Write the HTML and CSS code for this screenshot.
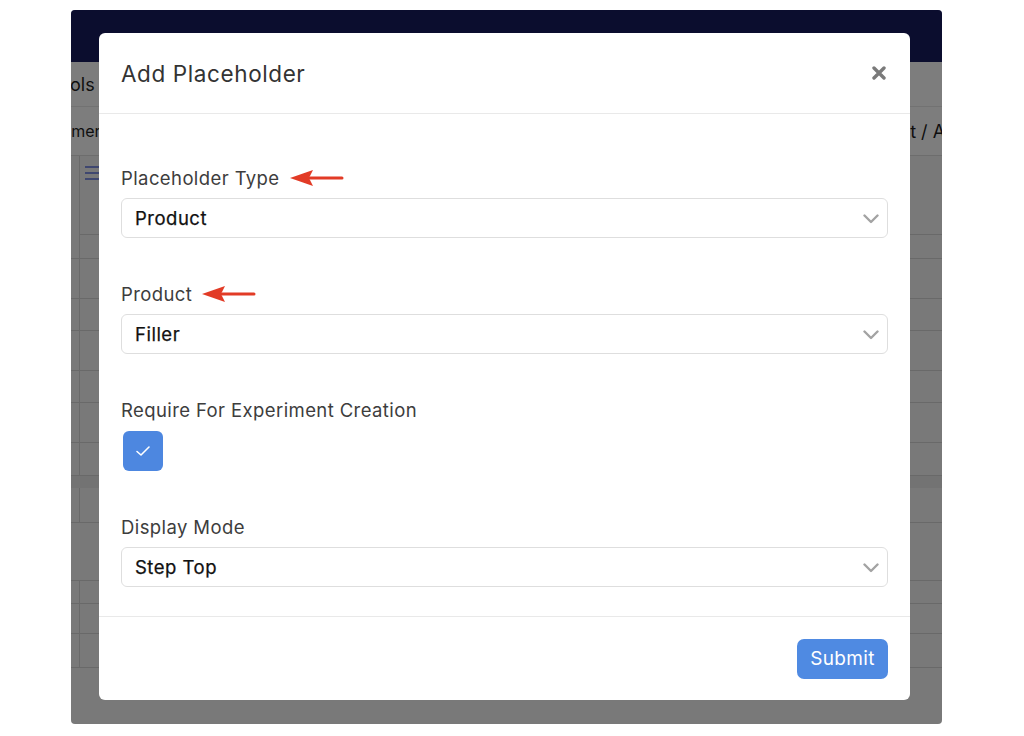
FILE: index.html
```html
<!DOCTYPE html>
<html lang="en">
<head>
    <meta charset="UTF-8">
    <meta name="viewport" content="width=device-width, initial-scale=1.0">
    <title>Add Placeholder</title>
    <link rel="stylesheet" href="styles.css">
</head>
<body>
    <div class="frame">
        <div class="app">
            <div class="topbar"></div>
            <div class="tabs"><span class="tab">Tools</span></div>
            <div class="crumbs">
                <span class="crumb-left">Customers</span>
                <span class="crumb-right">Experiment / Add Placeholder</span>
            </div>
            <div class="grid">
                <div class="row row-head">
                    <div class="cell-side"></div>
                    <div class="cell-main">
                        <div class="menu-icon"><span></span><span></span><span></span></div>
                    </div>
                </div>
                <div class="row" style="height: 40px"><div class="cell-side"></div></div>
                <div class="row" style="height: 32px"><div class="cell-side"></div></div>
                <div class="row" style="height: 40px"><div class="cell-side"></div></div>
                <div class="row" style="height: 32px"><div class="cell-side"></div></div>
                <div class="row" style="height: 40px"><div class="cell-side"></div></div>
                <div class="row" style="height: 33px"><div class="cell-side"></div></div>
                <div class="row band" style="height: 12px"></div>
                <div class="row" style="height: 35px"><div class="cell-side"></div></div>
                <div class="row" style="height: 58px"></div>
                <div class="row" style="height: 23px"><div class="cell-side"></div></div>
                <div class="row" style="height: 30px"><div class="cell-side"></div></div>
                <div class="row" style="height: 34px"><div class="cell-side"></div></div>
            </div>
        </div>

        <div class="backdrop"></div>

        <div class="modal">
            <div class="modal-header">
                <h1 class="modal-title">Add Placeholder</h1>
                <button class="close-btn" aria-label="Close">
                    <svg width="14" height="14" viewBox="0 0 14 14">
                        <path d="M2 2 L12 12 M12 2 L2 12" stroke="#7a7a7a" stroke-width="3.4" stroke-linecap="round"/>
                    </svg>
                </button>
            </div>

            <div class="modal-body">
                <div class="field">
                    <label class="field-label">Placeholder Type
                        <svg class="arrow" width="54" height="18" viewBox="0 0 54 18">
                            <path d="M20 9 H52" stroke="#e23b26" stroke-width="3" stroke-linecap="round"/>
                            <path d="M0 9 L23 1 L19 9 L23 17 Z" fill="#e23b26"/>
                        </svg>
                    </label>
                    <div class="select">
                        <span>Product</span>
                        <svg class="chevron" width="16" height="10" viewBox="0 0 16 10">
                            <path d="M1.5 1.5 L8 8 L14.5 1.5" fill="none" stroke="#a3a3a3" stroke-width="2.4" stroke-linecap="round" stroke-linejoin="round"/>
                        </svg>
                    </div>
                </div>

                <div class="field">
                    <label class="field-label">Product
                        <svg class="arrow" width="54" height="18" viewBox="0 0 54 18">
                            <path d="M20 9 H52" stroke="#e23b26" stroke-width="3" stroke-linecap="round"/>
                            <path d="M0 9 L23 1 L19 9 L23 17 Z" fill="#e23b26"/>
                        </svg>
                    </label>
                    <div class="select">
                        <span>Filler</span>
                        <svg class="chevron" width="16" height="10" viewBox="0 0 16 10">
                            <path d="M1.5 1.5 L8 8 L14.5 1.5" fill="none" stroke="#a3a3a3" stroke-width="2.4" stroke-linecap="round" stroke-linejoin="round"/>
                        </svg>
                    </div>
                </div>

                <div class="field">
                    <label class="field-label">Require For Experiment Creation</label>
                    <div class="checkbox">
                        <svg width="16" height="12" viewBox="0 0 16 12">
                            <path d="M2 6.5 L6 10 L14 2" fill="none" stroke="#fff" stroke-width="1.6" stroke-linecap="round" stroke-linejoin="round"/>
                        </svg>
                    </div>
                </div>

                <div class="field">
                    <label class="field-label">Display Mode</label>
                    <div class="select">
                        <span>Step Top</span>
                        <svg class="chevron" width="16" height="10" viewBox="0 0 16 10">
                            <path d="M1.5 1.5 L8 8 L14.5 1.5" fill="none" stroke="#a3a3a3" stroke-width="2.4" stroke-linecap="round" stroke-linejoin="round"/>
                        </svg>
                    </div>
                </div>
            </div>

            <div class="modal-footer">
                <button class="submit-btn">Submit</button>
            </div>
        </div>
    </div>
</body>
</html>
```

FILE: styles.css
```css
body {
    margin: 0;
    background-color: #ffffff;
    font-family: 'Inter', 'Liberation Sans', sans-serif;
}
.frame {
    position: relative;
    width: 871px;
    height: 714px;
    margin: 10px 0 0 71px;
    border-radius: 4px;
    overflow: hidden;
}
.app {
    height: 100%;
    display: flex;
    flex-direction: column;
    background-color: #ffffff;
    color: #1e1e1e;
    font-size: 18px;
}
.topbar {
    height: 52px;
    background-color: #161a5c;
}
.tabs {
    height: 44px;
    display: flex;
    align-items: center;
    border-bottom: 1px solid #e4e4e4;
    background-color: #fbfbfb;
}
.tab {
    margin-left: -22px;
}
.crumbs {
    height: 48px;
    display: flex;
    align-items: center;
    justify-content: space-between;
    background-color: #fbfbfb;
}
.crumb-left {
    margin-left: -44px;
    font-size: 16px;
}
.crumb-right {
    margin-right: -131px;
    white-space: nowrap;
}
.grid {
    flex: 1;
    background-color: #f3f3f3;
    border-top: 1px solid #dadada;
}
.row {
    display: flex;
    border-bottom: 1px solid #d2d2d2;
    box-sizing: border-box;
}
.row.band {
    background-color: #e6e6e6;
    border-bottom: none;
}
.row-head {
    height: 103px;
}
.cell-side {
    width: 8px;
    border-right: 1px solid #d2d2d2;
}
.cell-main {
    flex: 1;
    height: 68px;
    border-bottom: 1px solid #d2d2d2;
    padding: 10px 0 0 5px;
}
.menu-icon {
    display: flex;
    flex-direction: column;
    gap: 4px;
    width: 18px;
}
.menu-icon span {
    height: 2px;
    background-color: #7f8fe0;
}
.backdrop {
    position: absolute;
    inset: 0;
    background-color: rgba(0, 0, 0, 0.5);
}
.modal {
    position: absolute;
    left: 28px;
    top: 23px;
    width: 811px;
    height: 667px;
    background-color: #ffffff;
    border-radius: 6px;
    display: flex;
    flex-direction: column;
    box-sizing: border-box;
}
.modal-header {
    height: 80px;
    display: flex;
    align-items: center;
    justify-content: space-between;
    padding: 0 22px;
    border-bottom: 1px solid #e9e9e9;
}
.modal-title {
    margin: 0;
    font-size: 22.5px;
    font-weight: 400;
    letter-spacing: 0.6px;
    color: #333333;
}
.close-btn {
    background: none;
    border: none;
    padding: 0;
    margin-right: 2px;
    cursor: pointer;
    display: flex;
}
.modal-body {
    flex: 1;
    padding: 53px 22px 28px;
    display: flex;
    flex-direction: column;
    gap: 45px;
}
.field-label {
    display: flex;
    align-items: center;
    gap: 10px;
    height: 22px;
    margin-bottom: 9px;
    font-size: 18.5px;
    letter-spacing: 0.4px;
    color: #3d3d3d;
}
.select {
    height: 40px;
    box-sizing: border-box;
    border: 1px solid #dedede;
    border-radius: 6px;
    display: flex;
    align-items: center;
    justify-content: space-between;
    padding: 0 8px 0 13px;
    font-size: 18.5px;
    font-weight: 400;
    letter-spacing: 0.5px;
    color: #111111;
    -webkit-text-stroke: 0.25px #111111;
}
.chevron {
    margin-top: 2px;
}
.checkbox {
    width: 40px;
    height: 40px;
    margin: 10px 0 0 2px;
    border-radius: 6px;
    background-color: #4d87e0;
    display: flex;
    align-items: center;
    justify-content: center;
}
.modal-footer {
    height: 83px;
    border-top: 1px solid #e9e9e9;
    display: flex;
    align-items: center;
    justify-content: flex-end;
    padding: 0 22px;
}
.submit-btn {
    height: 40px;
    width: 91px;
    border: none;
    border-radius: 7px;
    background-color: #4f8ae2;
    color: #ffffff;
    font-family: 'Inter', 'Liberation Sans', sans-serif;
    font-size: 19px;
    letter-spacing: 0.3px;
    cursor: pointer;
}
```
